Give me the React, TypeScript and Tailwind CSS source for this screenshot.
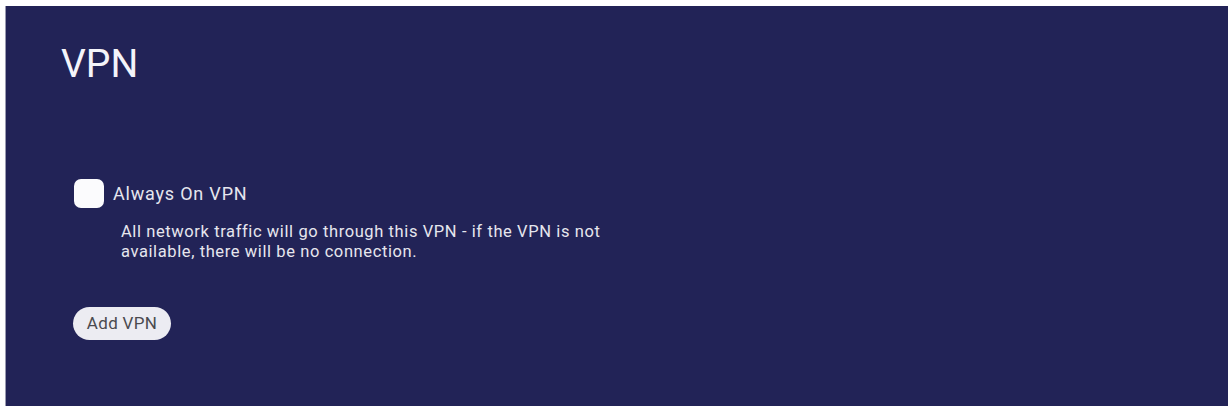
import React from "react";

export default function App() {
  return (
    <div className="w-[1228px] h-[406px] bg-white pt-[6px] pl-[5px] overflow-hidden" style={{ fontFamily: "Roboto, 'Noto Sans', sans-serif" }}>
      <div className="h-[400px] bg-[#222357] border-l border-[#9a9ab0] pl-[55px] pt-[35px]">
        <h1 className="text-[39px] leading-[46px] text-[#f4f4fa]">VPN</h1>
        <div className="mt-[92px] flex items-center ml-[13px]">
          <div className="w-[30px] h-[29px] rounded-[7px] bg-[#fbfbfd]" />
          <span className="ml-[9px] text-[18px] leading-[24px] tracking-[0.8px] text-[#e6e6ee]">Always On VPN</span>
        </div>
        <p className="ml-[60px] mt-[14px] text-[16.5px] leading-[20px] tracking-[0.6px] text-[#e6e6ee]">
          All network traffic will go through this VPN - if the VPN is not
          <br />
          available, there will be no connection.
        </p>
        <button className="mt-[45px] ml-[12px] h-[33px] w-[98px] rounded-full bg-[#ececf2] text-[17px] tracking-[0.3px] text-[#4a4a4f] flex items-center justify-center">
          Add VPN
        </button>
      </div>
    </div>
  );
}
